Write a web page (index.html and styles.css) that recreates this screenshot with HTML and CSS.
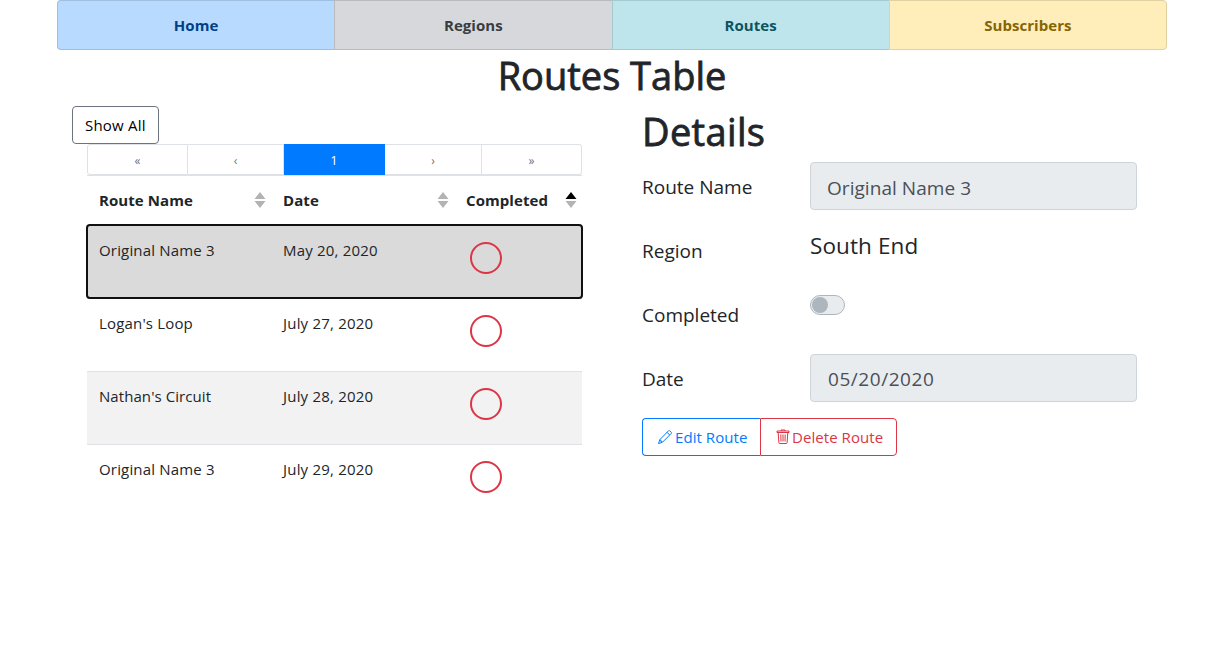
FILE: index.html
```html
<!DOCTYPE html>
<html lang="en">
<head>
<meta charset="utf-8">
<title>Routes Table</title>
<link rel="stylesheet" href="styles.css">
</head>
<body>
<div class="container">
  <nav class="tabs">
    <a class="tab tab-primary">Home</a>
    <a class="tab tab-secondary">Regions</a>
    <a class="tab tab-info">Routes</a>
    <a class="tab tab-warning">Subscribers</a>
  </nav>
  <h1 class="title">Routes Table</h1>
  <main class="columns">
    <section class="list">
      <button class="btn btn-show">Show All</button>
      <div class="table-wrap">
        <ul class="pagination">
          <li class="page wide">«</li>
          <li class="page">‹</li>
          <li class="page wide active">1</li>
          <li class="page next">›</li>
          <li class="page wide last">»</li>
        </ul>
        <div class="table">
          <div class="row head">
            <div class="cell"><span>Route Name</span><svg class="sort" viewBox="0 0 12 16"><path class="up" d="M6 0l5.5 7H.5z"/><path d="M.5 9h11L6 16z"/></svg></div>
            <div class="cell"><span>Date</span><svg class="sort" viewBox="0 0 12 16"><path class="up" d="M6 0l5.500 7H.5z"/><path d="M.5 9h11L6 16z"/></svg></div>
            <div class="cell"><span>Completed</span><svg class="sort asc" viewBox="0 0 12 16"><path class="up" d="M6 0l5.500 7H.5z"/><path d="M.5 9h11L6 16z"/></svg></div>
          </div>
          <div class="row body selected"><div class="cell">Original Name 3</div><div class="cell date">May 20, 2020</div><div class="cell"><i class="circle"></i></div></div>
          <div class="row body"><div class="cell">Logan's Loop</div><div class="cell date">July 27, 2020</div><div class="cell"><i class="circle"></i></div></div>
          <div class="row body striped"><div class="cell nathan">Nathan's Circuit</div><div class="cell date">July 28, 2020</div><div class="cell"><i class="circle"></i></div></div>
          <div class="row body"><div class="cell">Original Name 3</div><div class="cell date">July 29, 2020</div><div class="cell"><i class="circle"></i></div></div>
        </div>
      </div>
    </section>
    <section class="details">
      <h1 class="details-title">Details</h1>
      <div class="field"><label class="label">Route Name</label><div class="control">Original Name 3</div></div>
      <div class="field"><label class="label">Region</label><div class="plain">South End</div></div>
      <div class="field"><label class="label">Completed</label><div class="switch"></div></div>
      <div class="field"><label class="label">Date</label><div class="control date-value">05/20/2020</div></div>
      <div class="group">
        <button class="btn btn-edit"><svg class="icon" viewBox="0 0 16 16"><path d="M11.700 1.600a.6.6 0 0 1 .8 0l1.900 1.900a.6.6 0 0 1 0 .8l-9 9-3.900 1.300 1.300-3.900zM10 3.300l2.700 2.700M2.900 10.800l.8.300v1.200h1.200l.5.900"/></svg>Edit Route</button>
        <button class="btn btn-delete"><svg class="icon trash" viewBox="0 0 16 16"><path d="M2 2h12v1.500H2zM6 2V1h4v1M3.200 3.500l.7 10.300q.1.700.7.700h6.800q.6 0 .7-.7l.7-10.300M5.800 5.500l.2 7M8 5.500v7M10.200 5.500l-.2 7"/></svg>Delete Route</button>
      </div>
    </section>
  </main>
</div>
</body>
</html>
```
FILE: styles.css
```css
* { box-sizing: border-box; }
body {
  margin: 0;
  background: #fff;
  color: #212529;
  font: 400 15px/24px "Open Sans", "Noto Sans", sans-serif;
}
.container { width: 1110px; margin-left: 57px; }
.tabs { display: flex; height: 50px; }
.tab {
  flex: 1;
  border: 1px solid;
  border-right-width: 0;
  text-align: center;
  font-weight: 700;
  letter-spacing: 0.05px;
  line-height: 49px;
}
.tab:first-child { border-radius: 4px 0 0 4px; }
.tab:last-child { border-right-width: 1px; border-radius: 0 4px 4px 0; }
.tab-primary { background: #b8daff; color: #004085; border-color: #a0bfe0; }
.tab-secondary { background: #d6d8db; color: #383d41; border-color: #b9bbbe; }
.tab-info { background: #bee5eb; color: #0c5460; border-color: #a4c9cf; }
.tab-warning { background: #ffeeba; color: #856404; border-color: #e0d1a3; }
h1 {
  margin: 0;
  font-weight: 400;
  font-size: 38px;
  line-height: 48px;
  -webkit-text-stroke: 0.8px #212529;
}
.title { height: 56px; padding-top: 1px; text-align: center; }
.columns { display: flex; }
.list { width: 555px; padding-left: 15px; }
.btn {
  display: inline-flex;
  align-items: center;
  height: 38px;
  margin: 0;
  padding: 0 12px;
  border: 1px solid;
  border-radius: 4px;
  background: #fff;
  font: inherit;
  white-space: nowrap;
}
.btn-show { display: flex; width: 87px; border-color: #6c757d; color: #000; letter-spacing: 0.2px; }
.table-wrap { width: 495px; margin-left: 15px; }
.pagination {
  display: flex;
  height: 31px;
  margin: 0;
  padding: 0;
  list-style: none;
  text-align: center;
  font-size: 12px;
  line-height: 31px;
}
.page { width: 96px; border: 1px solid #dee2e6; border-left-width: 0; color: #6c757d; }
.page.wide { width: 101px; }
.page.next { width: 97px; }
.page.last { width: 100px; }
.page:first-child { border-left-width: 1px; border-radius: 3px 0 0 3px; }
.page:last-child { border-radius: 0 3px 3px 0; }
.page.active { background: #007bff; border-color: #007bff; color: #fff; font-size: 13px; }
.table { border-top: 1px solid #dee2e6; }
.row { display: grid; grid-template-columns: 184px 183px 128px; }
.head { height: 49px; font-weight: 700; letter-spacing: 0.07px; }
.head .cell { display: flex; align-items: center; justify-content: space-between; height: 47px; padding: 0 5px 0 12px; }
.sort { width: 12px; height: 16px; fill: #b3b3b3; }
.asc .up { fill: #000; }
.body { height: 73px; padding-top: 12px; border-top: 1px solid #dee2e6; letter-spacing: 0.17px; }
.body .cell { padding-left: 12px; }
.body .date { letter-spacing: 0.2px; }
.body .nathan { letter-spacing: 0.07px; }
.selected { background: #dadada; outline: 2px solid #101010; outline-offset: -1px; border-radius: 3px; position: relative; }
.striped { background: #f2f2f2; }
.circle { display: block; width: 32px; height: 32px; margin: 4px 0 0 4px; border: 2px solid #dc3545; border-radius: 50%; }
.details { width: 495px; margin-left: 30px; }
.details-title { height: 56px; padding-top: 1px; letter-spacing: 0.35px; }
.field { display: grid; grid-template-columns: 168px 327px; height: 64px; }
.label { font-size: 19px; line-height: 50px; white-space: nowrap; }
.control {
  height: 48px;
  padding-left: 16px;
  border: 1px solid #ced4da;
  border-radius: 4px;
  background: #e9ecef;
  color: #495057;
  font-size: 19px;
  letter-spacing: 0.05px;
  line-height: 50px;
}
.date-value { padding-left: 17px; letter-spacing: 0.55px; line-height: 48px; }
.plain { font-size: 22.5px; letter-spacing: 0.1px; line-height: 39px; }
.switch { width: 35px; height: 20px; margin-top: 5px; padding: 1px; border: 1px solid #adb5bd; border-radius: 10px; background: #e9ecef; }
.switch::before { content: ""; display: block; width: 16px; height: 16px; border-radius: 50%; background: #adb5bd; }
.group { display: flex; }
.btn-edit { width: 118px; padding-left: 14px; border-color: #007bff; border-right: 0; border-radius: 4px 0 0 4px; color: #007bff; letter-spacing: 0.06px; }
.btn-delete { width: 137px; padding-left: 14px; border-color: #dc3545; border-radius: 0 4px 4px 0; color: #dc3545; letter-spacing: 0.06px; }
.icon { flex: none; width: 16px; height: 16px; margin-right: 2px; fill: none; stroke: currentColor; stroke-width: 1; }
.trash { margin-right: 1px; }
```
